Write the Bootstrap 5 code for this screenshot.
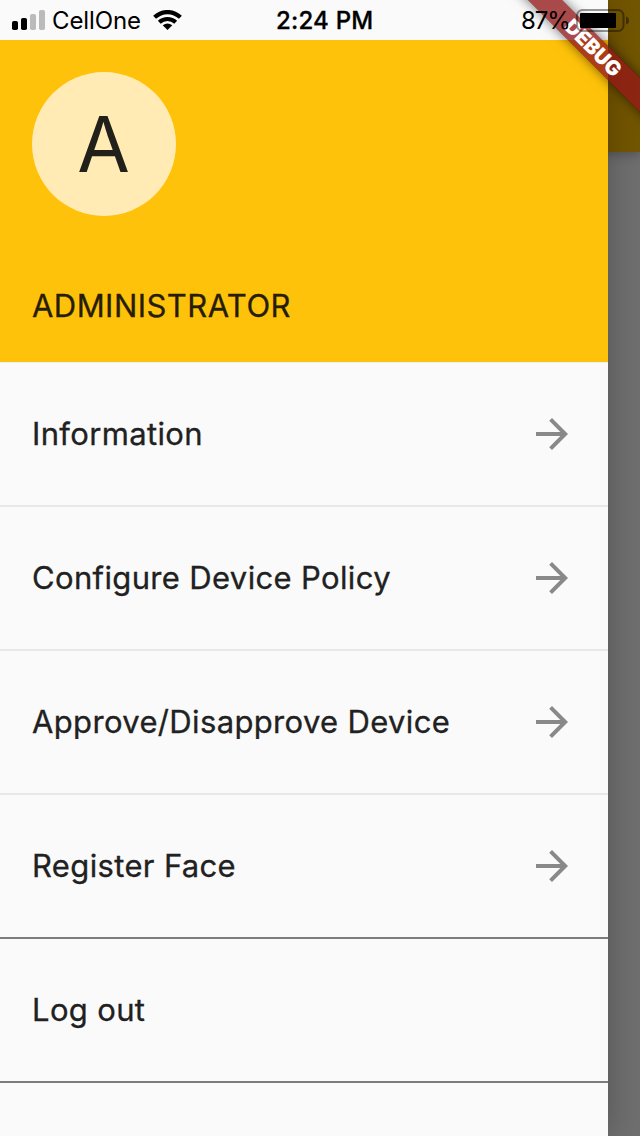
<!DOCTYPE html>
<html lang="en">
<head>
<meta charset="utf-8">
<meta name="viewport" content="width=device-width, initial-scale=1">
<title>Administrator menu</title>
<link href="https://cdn.jsdelivr.net/npm/bootstrap@5.3.0/dist/css/bootstrap.min.css" rel="stylesheet">
<style>
body { font-family: Inter, "Liberation Sans", sans-serif; background: #6c6c6c; color: #212121; }
.screen { width: 640px; height: 1136px; background: #6f6f6f; }
.backdrop-bar { height: 152px; background: #735600; box-shadow: 0 3px 10px rgba(0,0,0,.25); }
.drawer { width: 608px; background: #fafafa; box-shadow: 0 0 32px rgba(0,0,0,.25); }
.status-bar { height: 40px; color: #000; font-size: 24px; line-height: 40px; z-index: 3; }
.status-bar svg { display: block; }
.status-bar span { padding-top: 1px; }
.carrier { margin-left: 7px; letter-spacing: -.1px; }
.clock { left: 276px; top: 0; font-weight: 500; letter-spacing: .2px; -webkit-text-stroke: .3px; }
.charge { left: 521px; top: 0; letter-spacing: -1.1px; }
.battery { left: 575px; top: 8px; }
.account { height: 323px; margin-top: 40px; padding: 32px; background: #ffc20a; border-bottom: 1px solid #eee; }
.avatar { width: 144px; height: 144px; background: #ffebb3; color: #22201a; font-size: 77px; line-height: 1; }
.avatar span { transform: scaleX(.99); }
.role { margin-top: 66px; font-size: 31px; line-height: 48px; letter-spacing: .45px; color: #261d02; -webkit-text-stroke: .3px; }
.menu-row { height: 144px; padding: 0 32px; font-size: 31px; border-bottom: 2px solid #e8e8e8; letter-spacing: .35px; }
.menu-row span { padding-top: 1px; -webkit-text-stroke: .3px; }
.menu-row.ruled { border-bottom-color: #7d7b7c; }
.ribbon { width: 260px; height: 24px; left: 463px; top: 35.5px; transform: rotate(45deg); background: linear-gradient(rgba(183,28,28,.627), rgba(183,28,28,.627)), rgba(0,0,0,.4); box-shadow: 0 0 12px rgba(0,0,0,.55); color: #fff; font-size: 20.4px; font-weight: 900; line-height: 24px; z-index: 2; }
</style>
</head>
<body>
<div class="screen position-relative overflow-hidden">
  <div class="backdrop-bar position-absolute top-0 start-0 w-100"></div>
  <main class="drawer position-relative h-100 d-flex flex-column">
    <header class="account flex-shrink-0">
      <div class="avatar rounded-circle d-flex align-items-center justify-content-center"><span>A</span></div>
      <div class="role">ADMINISTRATOR</div>
    </header>
    <nav aria-label="Account">
      <div class="menu-row d-flex align-items-center justify-content-between"><span>Information</span><svg width="48" height="48" viewBox="0 0 24 24" fill="#898989"><path d="M12 4l-1.41 1.41L16.17 11H4v2h12.17l-5.58 5.59L12 20l8-8z"/></svg></div>
      <div class="menu-row d-flex align-items-center justify-content-between"><span>Configure Device Policy</span><svg width="48" height="48" viewBox="0 0 24 24" fill="#898989"><path d="M12 4l-1.41 1.41L16.17 11H4v2h12.17l-5.58 5.59L12 20l8-8z"/></svg></div>
      <div class="menu-row d-flex align-items-center justify-content-between"><span>Approve/Disapprove Device</span><svg width="48" height="48" viewBox="0 0 24 24" fill="#898989"><path d="M12 4l-1.41 1.41L16.17 11H4v2h12.17l-5.58 5.59L12 20l8-8z"/></svg></div>
      <div class="menu-row ruled d-flex align-items-center justify-content-between"><span>Register Face</span><svg width="48" height="48" viewBox="0 0 24 24" fill="#898989"><path d="M12 4l-1.41 1.41L16.17 11H4v2h12.17l-5.58 5.59L12 20l8-8z"/></svg></div>
      <div class="menu-row ruled d-flex align-items-center"><span>Log out</span></div>
    </nav>
  </main>
  <div class="ribbon position-absolute text-center">DEBUG</div>
  <div class="status-bar position-absolute top-0 start-0 w-100 d-flex align-items-center">
    <svg width="33" height="20" viewBox="0 0 33 20" style="margin-left:12px"><rect y="11" width="6" height="9" rx="1.8"/><rect x="9" y="8" width="6" height="12" rx="1.8"/><g fill="#bbb"><rect x="18" y="4" width="6" height="16" rx="1.8"/><rect x="27" y="0" width="6" height="20" rx="1.8"/></g></svg>
    <span class="carrier">CellOne</span>
    <svg style="margin-left:12px" width="29" height="20" viewBox="0 0 29 20"><g fill="none" stroke="#000" stroke-width="4.200"><path d="M1.600 7.300C9 .3 20 .3 27.400 7.300"/><path d="M6.300 12.200C11 7.900 18 7.900 22.700 12.200"/></g><path d="M9.700 15.300Q14.500 11.700 19.300 15.300L14.500 20Z"/></svg>
    <span class="clock position-absolute">2:24 PM</span>
    <span class="charge position-absolute">87%</span>
    <svg class="battery position-absolute" width="56" height="25" viewBox="0 0 56 25"><rect x="2" y="2" width="46.500" height="21" rx="5.500" fill="none" stroke="#000" stroke-opacity=".4" stroke-width="2"/><rect x="5" y="5" width="36" height="15" rx="1"/><path d="M51 8.500q3 1 3 4t-3 4z" fill-opacity=".45"/></svg>
  </div>
</div>
<script src="https://cdn.jsdelivr.net/npm/bootstrap@5.3.0/dist/js/bootstrap.bundle.min.js"></script>
</body>
</html>
